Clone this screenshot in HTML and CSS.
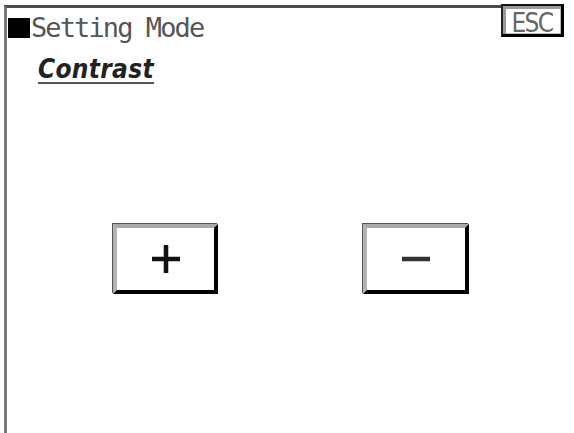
FILE: index.html
```html
<!DOCTYPE html>
<html lang="en">
<head>
  <meta charset="UTF-8">
  <title>Setting Mode</title>
  <link rel="stylesheet" href="styles.css">
</head>
<body>
  <div class="frame">
    <div class="header">
      <div class="title">
        <span class="mark"></span>
        <span class="title-text">Setting Mode</span>
      </div>
      <button class="esc">ESC</button>
    </div>

    <div class="subtitle">Contrast</div>

    <div class="controls">
      <button class="key" id="plus">
        <svg width="30" height="30" viewBox="0 0 30 30">
          <path d="M15 1 V29 M1 15 H29" stroke="#111" stroke-width="4.5" fill="none"/>
        </svg>
      </button>
      <button class="key" id="minus">
        <svg width="30" height="30" viewBox="0 0 30 30">
          <path d="M1 15 H29" stroke="#333" stroke-width="4.5" fill="none"/>
        </svg>
      </button>
    </div>
  </div>
</body>
</html>
```

FILE: styles.css
```css
* {
  box-sizing: border-box;
}

body {
  margin: 0;
  background: #ffffff;
  width: 574px;
  height: 433px;
  overflow: hidden;
}

.frame {
  margin: 5px 0 0 4px;
  width: 560px;
  height: 428px;
  border-top: 3px solid #4a4a4a;
  border-left: 3px solid #7a7a7a;
}

.header {
  display: flex;
  justify-content: space-between;
  align-items: flex-start;
}

.title {
  display: flex;
  align-items: center;
  margin-top: 8px;
  margin-left: 1px;
}

.mark {
  display: block;
  width: 22px;
  height: 20px;
  background: #000;
}

.title-text {
  font-family: "DejaVu Sans Mono", monospace;
  font-size: 27px;
  letter-spacing: -1.9px;
  color: #555;
  line-height: 24px;
  margin-left: 1px;
}

.esc {
  margin-top: -4px;
  width: 63px;
  height: 33px;
  padding: 5px 0 0;
  background: #fff;
  border-top: 2px solid #111;
  border-left: 2px solid #222;
  border-right: 3px solid #000;
  border-bottom: 3px solid #000;
  box-shadow: inset 3px 3px 0 #9a9a9a, inset -1px -1px 0 #bbb;
  font-family: "DejaVu Sans Condensed", "DejaVu Sans", sans-serif;
  font-size: 26px;
  line-height: 22px;
  color: #666;
  letter-spacing: -1.6px;
}

.subtitle {
  display: inline-block;
  margin: 17px 0 0 31px;
  font-family: "DejaVu Sans Condensed", "DejaVu Sans", sans-serif;
  font-weight: bold;
  font-style: italic;
  font-size: 26px;
  line-height: 24px;
  letter-spacing: 0.3px;
  color: #222;
  padding-bottom: 1px;
  border-bottom: 2px solid #555;
}

.controls {
  display: flex;
  gap: 145px;
  margin: 140px 0 0 106px;
}

.key {
  width: 105px;
  height: 70px;
  padding: 0;
  display: flex;
  align-items: center;
  justify-content: center;
  background: #fff;
  border-top: 4px solid #a8a8a8;
  border-left: 4px solid #b4b4b4;
  border-right: 4px solid #000;
  border-bottom: 4px solid #000;
  box-shadow: -1px -1px 0 #555;
}

#minus {
  width: 106px;
}
```
